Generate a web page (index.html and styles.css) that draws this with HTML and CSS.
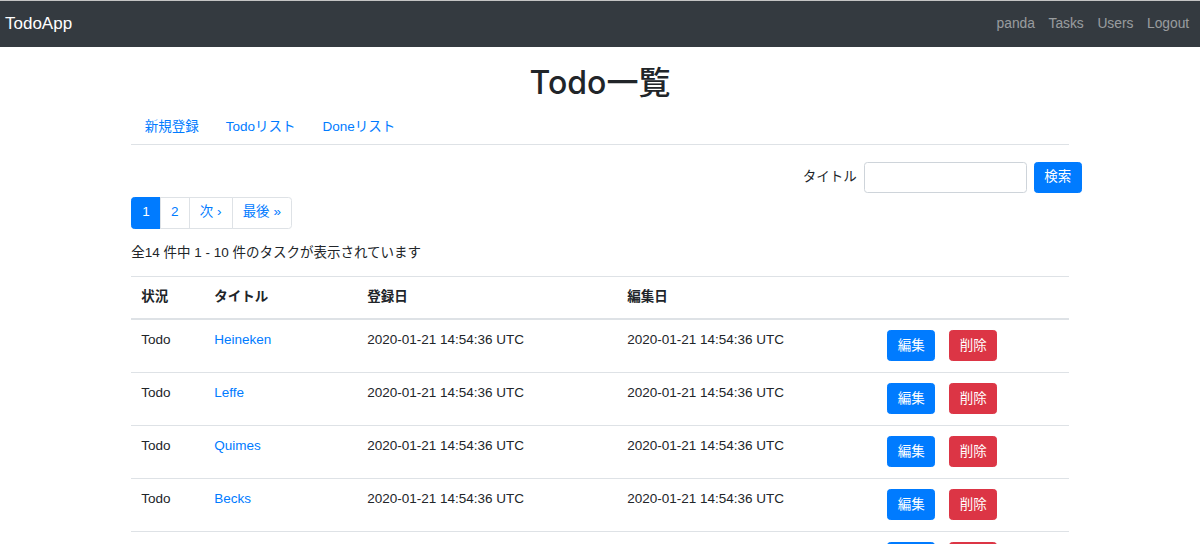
FILE: index.html
```html
<!DOCTYPE html>
<html lang="ja">
<head>
<meta charset="utf-8">
<title>TodoApp</title>
<link rel="stylesheet" href="styles.css">
</head>
<body>
<nav class="navbar">
  <a class="brand" href="#">TodoApp</a>
  <ul class="nav-right">
    <li><a href="#">panda</a></li>
    <li><a href="#">Tasks</a></li>
    <li><a href="#">Users</a></li>
    <li><a href="#">Logout</a></li>
  </ul>
</nav>
<main class="container">
  <h1 class="title">Todo一覧</h1>
  <ul class="tabs">
    <li><a href="#">新規登録</a></li>
    <li><a href="#">Todoリスト</a></li>
    <li><a href="#">Doneリスト</a></li>
  </ul>
  <form class="search">
    <label class="search-label" for="q">タイトル</label>
    <input class="search-input" id="q" type="text">
    <button class="btn btn-primary" type="button">検索</button>
  </form>
  <ul class="pagination">
    <li class="page active"><span>1</span></li>
    <li class="page"><a href="#">2</a></li>
    <li class="page"><a href="#">次 ›</a></li>
    <li class="page"><a href="#">最後 »</a></li>
  </ul>
  <p class="count">全14 件中 1 - 10 件のタスクが表示されています</p>
  <table class="table">
    <colgroup>
      <col class="c1"><col class="c2"><col class="c3"><col class="c4"><col class="c5">
    </colgroup>
    <thead>
      <tr><th>状況</th><th>タイトル</th><th>登録日</th><th>編集日</th><th></th></tr>
    </thead>
    <tbody>
      <tr><td>Todo</td><td><a href="#">Heineken</a></td><td>2020-01-21 14:54:36 UTC</td><td>2020-01-21 14:54:36 UTC</td><td><div class="actions"><a class="btn btn-primary" href="#">編集</a><a class="btn btn-danger" href="#">削除</a></div></td></tr>
      <tr><td>Todo</td><td><a href="#">Leffe</a></td><td>2020-01-21 14:54:36 UTC</td><td>2020-01-21 14:54:36 UTC</td><td><div class="actions"><a class="btn btn-primary" href="#">編集</a><a class="btn btn-danger" href="#">削除</a></div></td></tr>
      <tr><td>Todo</td><td><a href="#">Quimes</a></td><td>2020-01-21 14:54:36 UTC</td><td>2020-01-21 14:54:36 UTC</td><td><div class="actions"><a class="btn btn-primary" href="#">編集</a><a class="btn btn-danger" href="#">削除</a></div></td></tr>
      <tr><td>Todo</td><td><a href="#">Becks</a></td><td>2020-01-21 14:54:36 UTC</td><td>2020-01-21 14:54:36 UTC</td><td><div class="actions"><a class="btn btn-primary" href="#">編集</a><a class="btn btn-danger" href="#">削除</a></div></td></tr>
      <tr><td>Todo</td><td><a href="#">Chimay</a></td><td>2020-01-21 14:54:36 UTC</td><td>2020-01-21 14:54:36 UTC</td><td><div class="actions"><a class="btn btn-primary" href="#">編集</a><a class="btn btn-danger" href="#">削除</a></div></td></tr>
    </tbody>
  </table>
</main>
</body>
</html>
```
FILE: styles.css
```css
* { box-sizing: border-box; }
html, body { margin: 0; padding: 0; }
body {
  font-family: "Liberation Sans", "Noto Sans CJK JP", sans-serif;
  font-size: 13.5px;
  line-height: 1.5;
  color: #212529;
  background: #fff;
  overflow: hidden;
}
a { color: #007bff; text-decoration: none; }
ul { list-style: none; margin: 0; padding: 0; }

.navbar {
  height: 47px;
  border-top: 1px solid #c4c4c4;
  background: #343a40;
  display: flex;
  align-items: center;
  justify-content: space-between;
  padding: 0 4px 0 5px;
}
.brand {
  color: #fff;
  font-size: 17px;
  line-height: 1.5;
}
.nav-right { display: flex; }
.nav-right a {
  display: block;
  padding: 6.8px 6.8px;
  font-size: 13.8px;
  color: rgba(255,255,255,.5);
}

.container {
  width: 963px;
  margin: 0 auto;
  padding: 0 12.7px;
}
.title {
  margin: 16px 0 6.8px;
  text-align: center;
  font-family: "Inter", "Noto Sans CJK JP", sans-serif;
  font-size: 32px;
  font-weight: 500;
  line-height: 40px;
}
.tabs {
  display: flex;
  border-bottom: 1px solid #dee2e6;
}
.tabs a {
  display: block;
  padding: 6.8px 13.5px;
}

.search {
  display: flex;
  justify-content: flex-end;
  align-items: center;
  gap: 7px;
  margin: 17px -13px 4px 0;
}
.search-label { margin: 0; }
.search-input {
  width: 163px;
  height: 31px;
  border: 1px solid #ced4da;
  border-radius: 3.4px;
  font: inherit;
  padding: 5px 10px;
}
.btn {
  display: inline-block;
  height: 31px;
  padding: 4.5px 9.5px;
  border: 1px solid transparent;
  border-radius: 3.4px;
  font: inherit;
  line-height: 20px;
  color: #fff;
  cursor: pointer;
}
.btn-primary { background: #007bff; border-color: #007bff; }
.btn-danger { background: #dc3545; border-color: #dc3545; }

.pagination {
  display: flex;
  margin-bottom: 13.5px;
}
.page > a, .page > span {
  display: block;
  padding: 6.8px 10.1px;
  line-height: 1.25;
  border: 1px solid #dee2e6;
  margin-left: -1px;
  color: #007bff;
  background: #fff;
}
.page:first-child > * { margin-left: 0; border-radius: 3.4px 0 0 3.4px; }
.page:last-child > * { border-radius: 0 3.4px 3.4px 0; }
.page.active > span { background: #007bff; border-color: #007bff; color: #fff; }

.count { margin: 0 0 13.5px; }

.table {
  width: 100%;
  border-collapse: collapse;
  table-layout: fixed;
}
.c1 { width: 73px; }
.c2 { width: 153px; }
.c3 { width: 260px; }
.c4 { width: 260px; }
.c5 { width: 192px; }
.table th, .table td {
  padding: 10.5px 10px;
  text-align: left;
  vertical-align: top;
  border-top: 1px solid #dee2e6;
}
.table th {
  padding: 10px;
  vertical-align: bottom;
  border-bottom: 2px solid #dee2e6;
  font-weight: bold;
}
.actions { display: flex; gap: 14px; }
```
